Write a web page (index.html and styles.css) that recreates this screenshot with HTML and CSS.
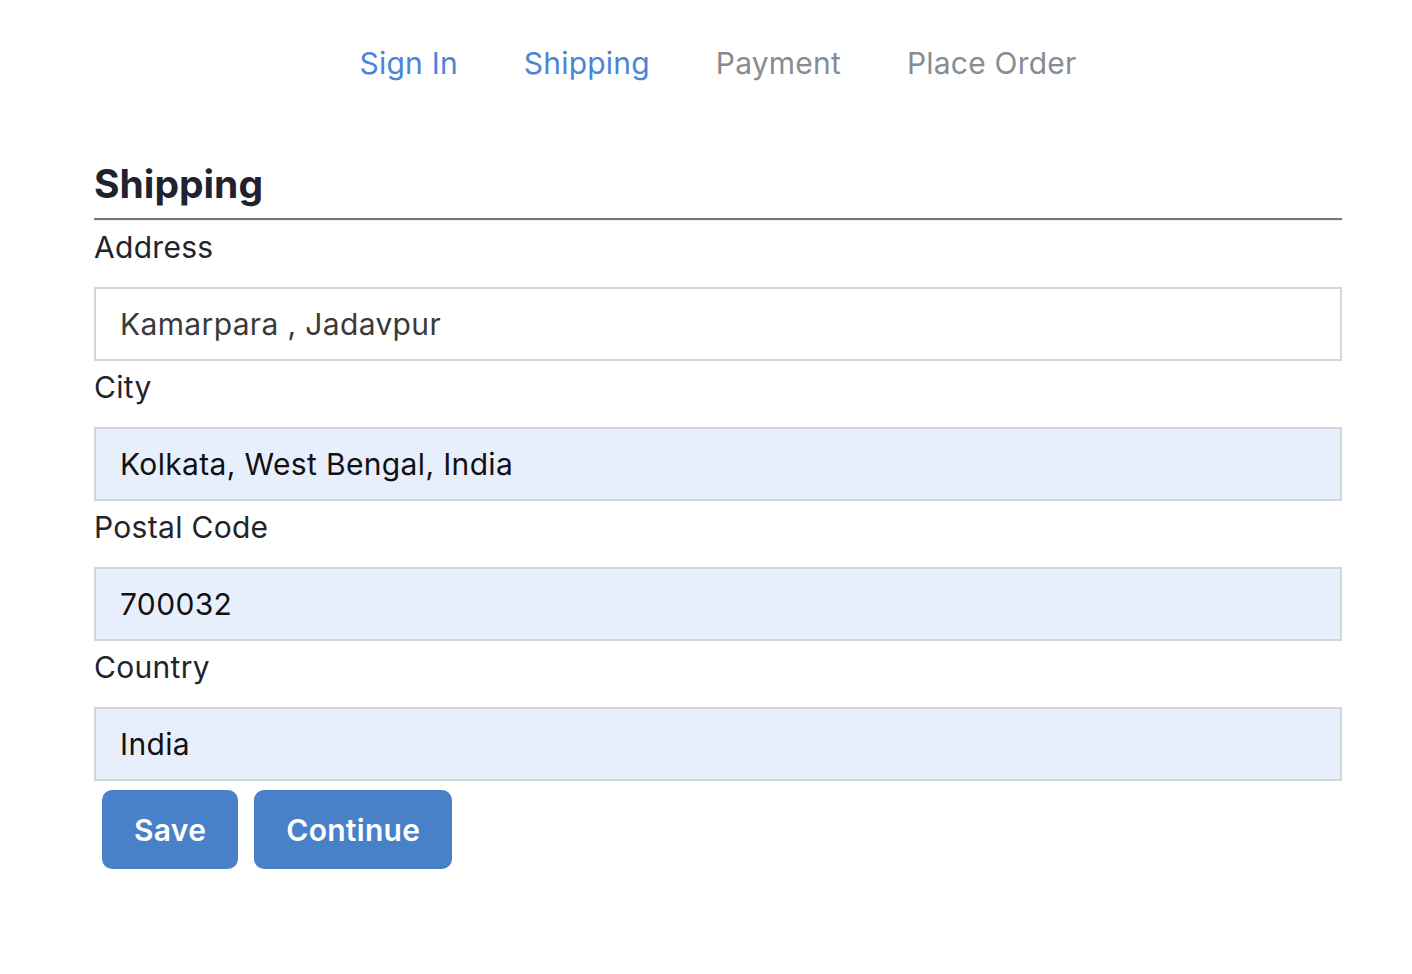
FILE: index.html
```html
<!DOCTYPE html>
<html>
<head>
<meta charset="utf-8">
<link rel="stylesheet" href="styles.css">
</head>
<body>
<div class="page">
  <nav class="steps">
    <a class="step active">Sign In</a>
    <a class="step active">Shipping</a>
    <a class="step">Payment</a>
    <a class="step">Place Order</a>
  </nav>
  <form class="form">
    <h1 class="title">Shipping</h1>
    <hr class="rule">
    <label class="label">Address</label>
    <input class="field" type="text" value="Kamarpara , Jadavpur">
    <label class="label">City</label>
    <input class="field filled" type="text" value="Kolkata, West Bengal, India">
    <label class="label">Postal Code</label>
    <input class="field filled" type="text" value="700032">
    <label class="label">Country</label>
    <input class="field filled" type="text" value="India">
    <div class="actions">
      <button class="btn" type="button">Save</button>
      <button class="btn" type="button">Continue</button>
    </div>
  </form>
</div>
</body>
</html>
```
FILE: styles.css
```css
* { box-sizing: border-box; }
html, body { margin: 0; padding: 0; background: #fff; }
body {
  font-family: Inter, "Liberation Sans", sans-serif;
  color: #212529;
}
.page {
  width: 1248px;
  margin-left: 94px;
}
.steps {
  display: flex;
  justify-content: center;
  padding-top: 42px;
  height: 150px;
}
.step {
  font-size: 30px;
  line-height: 42px;
  padding: 0 33px;
  letter-spacing: 0.2px;
  color: #868c94;
  text-decoration: none;
}
.step.active { color: #4a85d8; }
.title {
  margin: 0;
  font-size: 39px;
  font-weight: 700;
  line-height: 68px;
  color: #1f2330;
}
.rule {
  margin: 0;
  border: none;
  border-top: 2px solid #75777d;
  border-bottom: 1px solid #eceef1;
  height: 0;
}
.label {
  display: block;
  font-size: 30px;
  letter-spacing: 0.3px;
  line-height: 52px;
  margin-bottom: 14px;
  color: #212529;
}
.field {
  display: block;
  width: 100%;
  height: 74px;
  border: 2px solid #d3d6da;
  background: #fff;
  padding: 0 24px;
  font-family: inherit;
  font-size: 30px;
  letter-spacing: 0.35px;
  color: #3a3a3a;
  outline: none;
}
.field.filled {
  background: #e8effc;
  color: #111;
}
.actions {
  display: flex;
  gap: 16px;
  padding: 9px 8px;
}
.btn {
  height: 79px;
  padding: 0 32px;
  border: none;
  border-radius: 10px;
  background: #4881c8;
  color: #fff;
  font-family: inherit;
  font-size: 30px;
  font-weight: 600;
  letter-spacing: 0.3px;
}
```
